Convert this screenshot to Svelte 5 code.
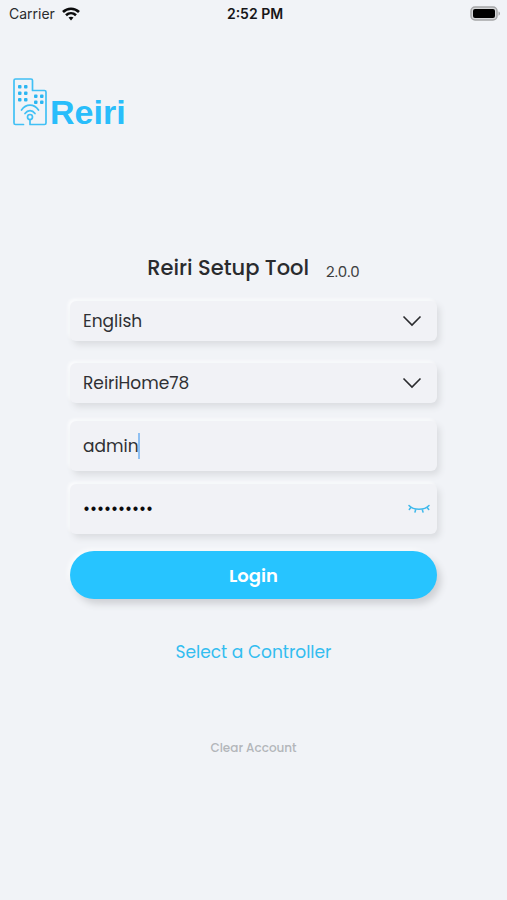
<script lang="ts">
    let language = $state('English');
    let controller = $state('ReiriHome78');
    let username = $state('admin');
    let password = $state('reiri12345');
    let showPassword = $state(false);
</script>

<div class="screen">
    <div class="status">
        <div class="status__carrier">
            <span>Carrier</span>
            <svg width="18" height="14" viewBox="0 0 18 14" fill="none" stroke="#0b0b0c" stroke-width="2.6">
                <path d="M1 5C5.500 .6 12.500 .6 17 5" />
                <path d="M4 8.200c2.900-2.700 7.100-2.700 10 0" />
                <path d="M6.500 10.600 9 13.400l2.500-2.800c-1.400-1.300-3.600-1.300-5 0z" fill="#0b0b0c" stroke="none" />
            </svg>
        </div>
        <div class="status__time">2:52 PM</div>
        <svg class="status__battery" width="31" height="16" viewBox="0 0 31 16">
            <rect x="1" y="1" width="26" height="13" rx="4" fill="#d5d6d8" stroke="#a5a6a8" stroke-width="1.500" />
            <rect x="3" y="3" width="22" height="9" rx="2" fill="#000" />
            <path d="M28.500 5.500c2 .6 2 3.600 0 4.200z" fill="#a5a6a8" />
        </svg>
    </div>

    <header class="logo">
        <svg width="34" height="48" viewBox="0 0 34 48" fill="none" stroke="#41c0f5" stroke-width="1.700" stroke-linejoin="round" stroke-linecap="round">
            <path d="M10.500 46.500H2.500q-1.500 0-1.500-1.500V2.500Q1 1 2.500 1H18q1.500 0 1.500 1.500V12.500H31.500q1.500 0 1.500 1.500V45q0 1.500-1.500 1.500H17V42" />
            <circle cx="17" cy="39" r="2.500" />
            <path d="M12 35.500c2.800-3.800 7.200-3.800 10 0M8.500 32c4.400-6.500 12.600-6.500 17 0" />
            <g fill="#2bb6f2" stroke="none">
                <rect x="5" y="7" width="3.500" height="3.500" rx="1" /><rect x="11" y="7" width="3.500" height="3.500" rx="1" />
                <rect x="5" y="13.500" width="3.500" height="3.500" rx="1" /><rect x="11" y="13.500" width="3.500" height="3.500" rx="1" />
                <rect x="5" y="20" width="3.500" height="3.500" rx="1" /><rect x="11" y="20" width="3.500" height="3.500" rx="1" />
                <rect x="21" y="16.500" width="3.500" height="3.500" rx="1" /><rect x="27" y="16.500" width="3.500" height="3.500" rx="1" />
                <rect x="21" y="22.500" width="3.500" height="3.500" rx="1" /><rect x="27" y="22.500" width="3.500" height="3.500" rx="1" />
            </g>
        </svg>
        <span class="logo__name">Reiri</span>
    </header>

    <main class="login">
        <div class="title">
            <h1>Reiri Setup Tool</h1>
            <span class="title__version">2.0.0</span>
        </div>

        <form onsubmit={(e) => e.preventDefault()}>
            <div class="field field--select">
                <select aria-label="Language" bind:value={language}>
                    <option>English</option>
                </select>
                <svg class="chevron" width="20" height="12" viewBox="0 0 20 12"><path d="M1.500 1.500 10 10l8.500-8.500" /></svg>
            </div>
            <div class="field field--select">
                <select aria-label="Controller" bind:value={controller}>
                    <option>ReiriHome78</option>
                </select>
                <svg class="chevron" width="20" height="12" viewBox="0 0 20 12"><path d="M1.500 1.500 10 10l8.500-8.500" /></svg>
            </div>
            <label class="field field--text">
                <input class="username" type="text" aria-label="Username" bind:value={username} />
                <span class="caret"></span>
            </label>
            <div class="field field--text">
                <input
                    class="password"
                    type={showPassword ? 'text' : 'password'}
                    aria-label="Password"
                    bind:value={password}
                />
                <button class="eye" type="button" aria-label="Show password" onclick={() => (showPassword = !showPassword)}>
                    <svg width="22" height="10" viewBox="0 0 22 10" fill="none" stroke="#3fb9ec" stroke-width="1.500" stroke-linecap="round">
                        <path d="M1 1.500c4.500 5 15.500 5 20 0M3 3.300 1.300 5.500M7.800 5.200 7 8M14.200 5.200 15 8M19 3.300l1.700 2.200" />
                    </svg>
                </button>
            </div>
            <button class="submit" type="submit">Login</button>
        </form>

        <a class="select-link" href="#controllers">Select a Controller</a>
        <button class="clear" type="button">Clear Account</button>
    </main>
</div>

<style>
    :global(body) {
        margin: 0;
        background: #f1f3f7;
    }

    .screen {
        min-height: 100vh;
        background: #f1f3f7;
        color: #2a2b2e;
        font-family: Poppins, Inter, sans-serif;
    }

    .status {
        display: grid;
        grid-template-columns: 1fr auto 1fr;
        align-items: center;
        height: 27px;
        padding: 0 6px 0 9px;
        font-family: Inter, sans-serif;
        font-size: 14px;
    }

    .status__carrier {
        display: flex;
        align-items: center;
        gap: 7px;
    }

    .status__time {
        color: #161618;
        font-weight: 600;
    }

    .status__battery {
        justify-self: end;
    }

    .logo {
        display: flex;
        align-items: flex-end;
        gap: 3px;
        padding: 51px 13px 0;
    }

    .logo__name {
        color: #29bdfb;
        font-family: "Liberation Sans", Arial, sans-serif;
        font-size: 34px;
        font-weight: 700;
        line-height: 28px;
    }

    .login {
        display: flex;
        flex-direction: column;
        align-items: center;
        padding: 126px 70px 40px;
    }

    .title {
        display: flex;
        align-items: flex-end;
        gap: 17px;
    }

    h1 {
        margin: 0;
        font-size: 21px;
        font-weight: 500;
        line-height: 32px;
    }

    .title__version {
        color: #3c3d40;
        font-size: 15px;
        line-height: 24px;
    }

    form {
        display: flex;
        flex-direction: column;
        width: 100%;
        margin-top: 17px;
    }

    .field {
        display: flex;
        align-items: center;
        box-sizing: border-box;
        position: relative;
        border-radius: 6px;
        background: #f1f2f6;
        box-shadow: 3px 4px 6px #dbdde1, -2px -2px 3px #fbfcfd;
    }

    .field--select {
        height: 40px;
        margin-bottom: 22px;
    }

    .field--text {
        height: 50px;
        margin-bottom: 13px;
        padding-left: 13px;
    }

    .field--select + .field--text {
        margin-top: -4px;
    }

    select,
    input {
        min-width: 0;
        padding: 0;
        border: 0;
        outline: 0;
        background: transparent;
        color: #2f3033;
        font-family: inherit;
        font-size: 17px;
    }

    select {
        appearance: none;
        flex: 1;
        height: 100%;
        padding: 0 44px 0 13px;
    }

    .chevron {
        position: absolute;
        right: 15px;
        fill: none;
        stroke: #2a2b2e;
        stroke-width: 1.6;
        pointer-events: none;
    }

    .username {
        field-sizing: content;
        caret-color: transparent;
    }

    .caret {
        width: 2px;
        height: 26px;
        margin-left: -1px;
        background: #8fc0f2;
    }

    .password {
        flex: 1;
        color: #0b0b0c;
    }

    button {
        border: 0;
        font-family: inherit;
        cursor: pointer;
    }

    .eye {
        display: flex;
        padding: 7px;
        background: transparent;
    }

    .submit {
        height: 48px;
        margin-top: 4px;
        border-radius: 24px;
        background: #27c4ff;
        box-shadow: 4px 5px 7px #cfd1d5, -2px -2px 4px #fbfcfd;
        color: #fff;
        font-size: 18px;
        font-weight: 600;
    }

    .select-link {
        margin-top: 40px;
        color: #33bdf0;
        font-size: 17px;
        line-height: 26px;
        text-decoration: none;
    }

    .clear {
        margin-top: 74px;
        padding: 0;
        background: transparent;
        color: #b3b6ba;
        font-size: 12px;
        font-weight: 500;
        line-height: 18px;
    }
</style>
